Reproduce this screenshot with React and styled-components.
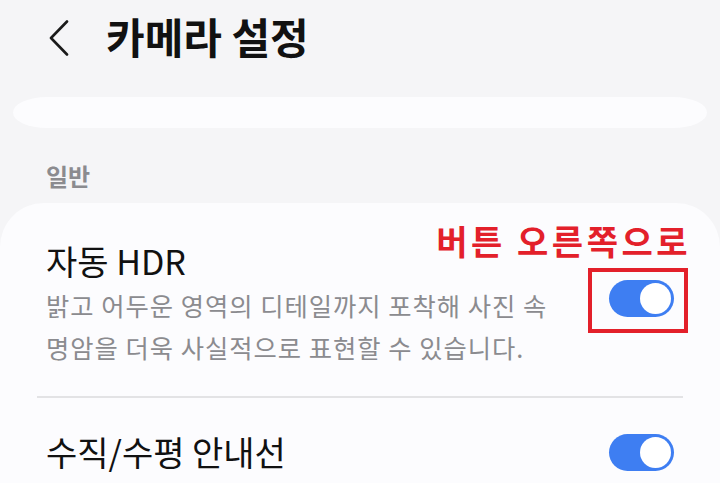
import React from 'react';
import styled, { createGlobalStyle } from 'styled-components';

const GlobalStyle = createGlobalStyle`
  html, body {
    margin: 0;
    padding: 0;
    background: #f5f5f7;
    overflow: hidden;
  }
  body {
    font-family: "Noto Sans CJK KR", "Noto Sans", sans-serif;
  }
`;

const Page = styled.div`
  width: 720px;
  height: 483px;
  overflow: hidden;
  background: #f5f5f7;
`;

const Header = styled.header`
  display: flex;
  align-items: flex-start;
  gap: 37px;
  height: 97px;
  box-sizing: border-box;
  padding: 12px 0 0 49px;
`;

const BackIcon = styled.svg`
  margin-top: 8px;
  flex-shrink: 0;
`;

const Title = styled.h1`
  margin: 0;
  font-size: 42px;
  line-height: 48px;
  font-weight: 700;
  color: #111;
`;

const Strip = styled.div`
  height: 31px;
  margin: 0 13px;
  background: #fcfcfe;
  border-radius: 34px / 15.5px;
`;

const SectionLabel = styled.div`
  margin: 33px 0 12px 46px;
  font-size: 24px;
  line-height: 30px;
  font-weight: 700;
  color: #8b8b8f;
`;

const Card = styled.section`
  background: #fcfcfe;
  border-radius: 44px 44px 0 0;
  min-height: 400px;
`;

const Row = styled.div`
  display: flex;
  align-items: center;
  justify-content: space-between;
  padding: ${(p) => p.$pad};
  padding-left: 46px;
  padding-right: 46px;
`;

const TextCol = styled.div`
  width: 540px;
  word-break: keep-all;
`;

const ItemTitle = styled.div`
  font-size: 34px;
  line-height: 40px;
  color: #111;
`;

const ItemDesc = styled.div`
  margin-top: 3px;
  font-size: 25.3px;
  line-height: 42px;
  letter-spacing: 1px;
  color: #8b8b8f;
`;

const Divider = styled.hr`
  margin: 0 37px;
  border: none;
  border-top: 2px solid #e3e3e5;
`;

const ToggleSlot = styled.div`
  position: relative;
  flex-shrink: 0;
  margin-bottom: ${(p) => p.$lift || 0}px;
`;

const Toggle = styled.div`
  width: 65px;
  height: 37px;
  border-radius: 18.5px;
  background: #3e7ef2;
  display: flex;
  align-items: center;
  justify-content: ${(p) => (p.$on ? 'flex-end' : 'flex-start')};
  padding: 0 3px;
  box-sizing: border-box;
`;

const Knob = styled.div`
  width: 31px;
  height: 31px;
  border-radius: 50%;
  background: #fff;
`;

const RedFrame = styled.div`
  position: absolute;
  top: -12px;
  left: -21px;
  right: -14px;
  bottom: -16px;
  border: 4px solid #e3202a;
`;

const RedLabel = styled.div`
  position: absolute;
  right: -17px;
  bottom: calc(100% + 19px);
  white-space: nowrap;
  font-size: 34px;
  line-height: 40px;
  font-weight: 700;
  letter-spacing: 3.5px;
  color: #e3202a;
`;

const Switch = ({ on = true }) => (
  <Toggle $on={on}>
    <Knob />
  </Toggle>
);

const App = () => {
  return (
    <Page>
      <GlobalStyle />
      <Header>
        <BackIcon width="20" height="36" viewBox="0 0 20 36">
          <polyline
            points="18,1.5 2,18 18,34.5"
            fill="none"
            stroke="#1a1a1a"
            strokeWidth="2.6"
            strokeLinecap="round"
            strokeLinejoin="round"
          />
        </BackIcon>
        <Title>카메라 설정</Title>
      </Header>
      <Strip />
      <SectionLabel>일반</SectionLabel>
      <Card>
        <Row $pad="38px 0 28px">
          <TextCol>
            <ItemTitle>자동 HDR</ItemTitle>
            <ItemDesc>
              밝고 어두운 영역의 디테일까지 포착해 사진 속 명암을 더욱 사실적으로 표현할 수 있습니다.
            </ItemDesc>
          </TextCol>
          <ToggleSlot $lift={12}>
            <Switch on />
            <RedFrame />
            <RedLabel>버튼 오른쪽으로</RedLabel>
          </ToggleSlot>
        </Row>
        <Divider />
        <Row $pad="34px 0 20px">
          <TextCol>
            <ItemTitle>수직/수평 안내선</ItemTitle>
          </TextCol>
          <ToggleSlot>
            <Switch on />
          </ToggleSlot>
        </Row>
      </Card>
    </Page>
  );
};

export default App;
